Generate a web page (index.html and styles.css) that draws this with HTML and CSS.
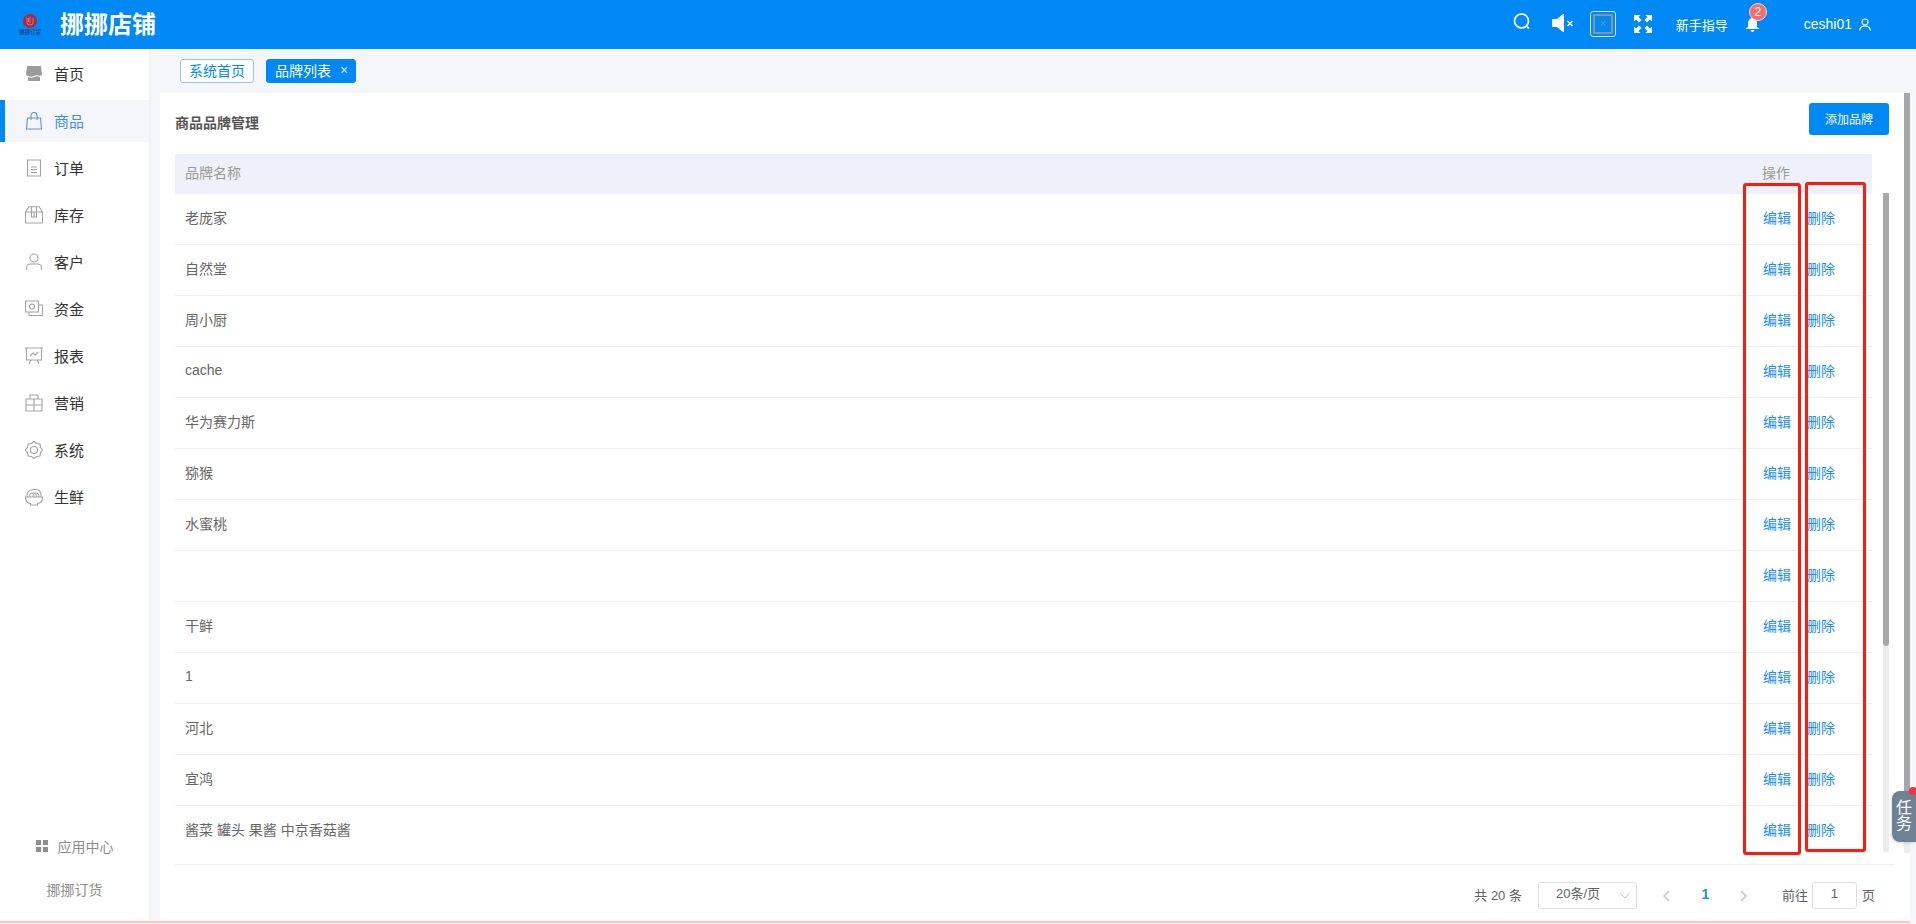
FILE: index.html
```html
<!DOCTYPE html>
<html lang="zh-CN">
<head>
<meta charset="utf-8">
<title>商品品牌管理</title>
<link rel="stylesheet" href="styles.css">
</head>
<body>
<div class="app">
  <header class="topbar">
    <div class="logo">
      <svg class="logo-mark" viewBox="0 0 14 14" width="14" height="14"><circle cx="7" cy="7" r="7" fill="#a82a45"/><path d="M4 3.500v5q0 2.500 3 2.500t3-2.500v-5M7 2.500v7M5.500 4v4" fill="none" stroke="#d88a96" stroke-width=".8"/></svg>
      <span class="logo-text">挪挪订货</span>
    </div>
    <h1 class="brand">挪挪店铺</h1>
    <div class="top-actions">
      <svg class="ic-search" width="18" height="18" viewBox="0 0 18 18" fill="none" stroke="#fff" stroke-width="1.700"><circle cx="8.500" cy="8" r="7"/><path d="M14 13.500l2 2"/></svg>
      <svg class="ic-sound" width="22" height="18" viewBox="0 0 22 18"><path d="M0 6q0-1 1-1h4l6-5q1-.5 1 1v16q0 1.500-1 1l-6-5H1q-1 0-1-1z" fill="#fff"/><path d="M15.500 7l5 5M20.500 7l-5 5" stroke="#fff" stroke-width="1.500"/></svg>
      <div class="broken-box"><div class="broken-inner">×</div></div>
      <svg class="ic-expand" width="18" height="18" viewBox="0 0 18 18" fill="#fff"><path d="M0 0h6.500L4.500 2l3 3-2.500 2.500-3-3L0 6.500zM18 0v6.500l-2-2-3 3L10.500 5l3-3-2-2zM0 18v-6.500l2 2 3-3L7.500 13l-3 3 2 2zM18 18h-6.500l2-2-3-3 2.500-2.500 3 3 2-2z"/></svg>
      <span class="guide">新手指导</span>
      <div class="bell">
        <svg width="15" height="15" viewBox="0 0 15 15" fill="#fff"><path d="M7.500 0a1 1 0 0 1 1 1.200C11 2 12 4 12 6.500V10l2.500 2H.5L3 10V6.500C3 4 4 2 6.500 1.200A1 1 0 0 1 7.500 0zM5.500 13h4q-.5 2-2 2t-2-2z"/></svg>
        <span class="badge">2</span>
      </div>
      <span class="username">ceshi01</span>
      <svg class="ic-user" width="12" height="13" viewBox="0 0 12 13" fill="none" stroke="#fff" stroke-width="1.200"><circle cx="6" cy="4" r="3"/><path d="M.7 12.500Q1 8 6 8t5.300 4.500"/></svg>
    </div>
  </header>

  <div class="layout">
    <aside class="sidebar">
      <nav class="menu">
        <a class="menu-item"><svg class="mi" viewBox="0 0 18 18"><path d="M2 1h14l1 9-2 1v5H3v-5l-2-1z" fill="#9b9b9b" stroke="none"/><path d="M3 11.500q3 1.500 6 0t6 0" stroke="#fff"/></svg>首页</a>
        <a class="menu-item active"><svg class="mi" viewBox="0 0 18 18"><path d="M2.500 6h13l1 11h-15zM6 8V3.500a3 3 0 0 1 6 0V8"/></svg>商品</a>
        <a class="menu-item"><svg class="mi" viewBox="0 0 18 18"><path d="M2.500 1h13v16h-13zM6 8h6M6 10.500h6M6 13.500h6"/></svg>订单</a>
        <a class="menu-item"><svg class="mi" viewBox="0 0 18 18"><path d="M.5 6L4 .8h10L17.500 6v11H.5zM.5 6h17M6.500 1v10h5V1M9 6v5"/></svg>库存</a>
        <a class="menu-item"><svg class="mi" viewBox="0 0 18 18"><circle cx="9" cy="5" r="4"/><path d="M1.500 17v-2q0-4 4-4h7q4 0 4 4v2"/></svg>客户</a>
        <a class="menu-item"><svg class="mi" viewBox="0 0 18 18"><path d="M.5 1h13v11H.5zM14 5h3.500v10.500H4V12"/><circle cx="7" cy="6.500" r="2.500"/></svg>资金</a>
        <a class="menu-item"><svg class="mi" viewBox="0 0 18 18"><path d="M0 1h18M1.500 1v12h15V1M6 13l-2 4M12 13l2 4M5 9l3-3 2 2 3-3"/></svg>报表</a>
        <a class="menu-item"><svg class="mi" viewBox="0 0 18 18"><path d="M1 5h16v12H1zM1 11h16M9 5v12M5 5V1h8v4"/></svg>营销</a>
        <a class="menu-item"><svg class="mi" viewBox="0 0 18 18"><path d="M17.500 9L15.500 11.700 15 15 11.700 15.500 9 17.500 6.300 15.500 3 15 2.500 11.700 .5 9 2.500 6.300 3 3 6.300 2.500 9 .5 11.700 2.500 15 3 15.500 6.300z" stroke-linejoin="round"/><circle cx="9" cy="9" r="3.500"/></svg>系统</a>
        <a class="menu-item"><svg class="mi" viewBox="0 0 18 18"><path d="M.5 9h17q0 6-5 6.500v1.500h-7v-1.500Q.5 15 .5 9zM2 9q-1-7 7-7.500T16 9M5 9q-1-4 3-4t3 4M8 9q0-4 3-4t3 4"/></svg>生鲜</a>
      </nav>
      <div class="side-bottom">
        <a class="side-link"><svg class="grid-ic" width="12" height="12" viewBox="0 0 12 12" fill="#8f8f8f"><rect width="5" height="5"/><rect x="7" width="5" height="5"/><rect y="7" width="5" height="5"/><rect x="7" y="7" width="5" height="5"/></svg>应用中心</a>
        <a class="side-link">挪挪订货</a>
      </div>
    </aside>

    <main class="main">
      <div class="tags">
        <span class="tag">系统首页</span>
        <span class="tag tag-on">品牌列表<i class="tag-x">×</i></span>
      </div>
      <section class="card">
        <div class="card-body">
          <div class="card-head">
            <h2 class="card-title">商品品牌管理</h2>
            <button class="btn-add">添加品牌</button>
          </div>
          <div class="table-zone">
            <div class="table">
              <div class="row row-head"><span class="name">品牌名称</span><span class="op-head">操作</span></div>
              <div class="rows">
                <div class="row"><span class="name">老庞家</span><a class="op">编辑</a><a class="op">删除</a></div>
                <div class="row"><span class="name">自然堂</span><a class="op">编辑</a><a class="op">删除</a></div>
                <div class="row"><span class="name">周小厨</span><a class="op">编辑</a><a class="op">删除</a></div>
                <div class="row"><span class="name">cache</span><a class="op">编辑</a><a class="op">删除</a></div>
                <div class="row"><span class="name">华为赛力斯</span><a class="op">编辑</a><a class="op">删除</a></div>
                <div class="row"><span class="name">猕猴</span><a class="op">编辑</a><a class="op">删除</a></div>
                <div class="row"><span class="name">水蜜桃</span><a class="op">编辑</a><a class="op">删除</a></div>
                <div class="row"><span class="name"></span><a class="op">编辑</a><a class="op">删除</a></div>
                <div class="row"><span class="name">干鲜</span><a class="op">编辑</a><a class="op">删除</a></div>
                <div class="row"><span class="name">1</span><a class="op">编辑</a><a class="op">删除</a></div>
                <div class="row"><span class="name">河北</span><a class="op">编辑</a><a class="op">删除</a></div>
                <div class="row"><span class="name">宜鸿</span><a class="op">编辑</a><a class="op">删除</a></div>
                <div class="row"><span class="name">酱菜 罐头 果酱 中京香菇酱</span><a class="op">编辑</a><a class="op">删除</a></div>
              </div>
            </div>
            <div class="inner-scroll"><div class="inner-thumb"></div></div>
          </div>
          <footer class="pager">
            <span class="total">共 20 条</span>
            <div class="size-select">20条/页<svg class="chev" width="10" height="6" viewBox="0 0 10 6" fill="none" stroke="#c0c4cc"><path d="M.5.5L5 5 9.500.5"/></svg></div>
            <div class="pages">
              <span class="page-cell"><svg width="8" height="12" viewBox="0 0 8 12" fill="none" stroke="#c0c4cc" stroke-width="1.500"><path d="M7 1L2 6l5 5"/></svg></span>
              <span class="page-cell current">1</span>
              <span class="page-cell"><svg width="8" height="12" viewBox="0 0 8 12" fill="none" stroke="#c0c4cc" stroke-width="1.500"><path d="M1 1l5 5-5 5"/></svg></span>
            </div>
            <span class="goto">前往</span>
            <div class="page-input">1</div>
            <span class="goto-end">页</span>
          </footer>
        </div>
        <div class="outer-scroll"><div class="outer-thumb"></div></div>
      </section>
    </main>
  </div>
  <div class="pink-line"></div>
</div>

<div class="mark mark-edit"></div>
<div class="mark mark-del"></div>
<div class="task">任务<i class="task-dot"></i></div>
</body>
</html>
```
FILE: styles.css
```css
* { box-sizing: border-box; }
html { margin: 0; height: 924px; overflow: hidden; }
body {
  position: relative;
  margin: 0;
  height: 924px;
  overflow: hidden;
  background: #f5f6fa;
  font-family: "Liberation Sans", "Noto Sans CJK SC", sans-serif;
  font-size: 14px;
  color: #666;
}
h1, h2 { margin: 0; }
a { color: inherit; text-decoration: none; }

.app { display: flex; flex-direction: column; height: 924px; overflow: hidden; }

/* top bar */
.topbar {
  display: flex;
  align-items: center;
  flex: none;
  height: 49px;
  background: #0089f5;
  color: #fff;
}
.logo {
  display: flex;
  flex-direction: column;
  align-items: center;
  width: 26px;
  margin-left: 17px;
  margin-top: 1px;
}
.logo-mark { display: block; }
.logo-text {
  font-size: 5.5px;
  line-height: 7px;
  margin-top: 1px;
  color: #0d2f5c;
  white-space: nowrap;
}
.brand {
  margin-left: 17px;
  font-size: 24px;
  line-height: 30px;
  font-weight: 700;
  color: #fff;
}
.top-actions {
  display: flex;
  align-items: center;
  margin-left: auto;
  padding-right: 45px;
  height: 100%;
}
.ic-search { margin-top: -5px; }
.ic-sound { margin-left: 21px; margin-top: -3px; }
.broken-box {
  width: 26px;
  height: 26px;
  margin-left: 16px;
  margin-top: -1px;
  padding: 2px;
  border: 1px solid #cbe6fd;
  border-radius: 3px;
}
.broken-inner {
  width: 20px;
  height: 20px;
  border: 2px solid #8a93a0;
  color: #8a93a0;
  font-size: 11px;
  line-height: 15px;
  text-align: center;
}
.ic-expand { margin-left: 18px; margin-top: -1px; }
.guide { margin-left: 24px; font-size: 13px; margin-top: -1px; }
.bell { position: relative; margin-left: 17px; height: 15px; margin-top: -1px; }
.bell svg { display: block; }
.badge {
  position: absolute;
  left: 4px;
  top: -14px;
  width: 18px;
  height: 18px;
  border: 1px solid #fbd5d5;
  border-radius: 50%;
  background: #f56c6c;
  color: #fff;
  font-size: 12px;
  line-height: 16px;
  text-align: center;
}
.username { margin-left: 44px; font-size: 14px; margin-top: -1px; }
.ic-user { margin-left: 7px; margin-top: -1px; }

/* layout */
.layout { display: flex; flex: 1; min-height: 0; }

.sidebar {
  display: flex;
  flex-direction: column;
  flex: none;
  width: 149px;
  padding: 4px 0 9px;
  background: #fff;
  box-shadow: 1px 0 2px rgba(0, 0, 0, .04);
}
.menu { display: flex; flex-direction: column; gap: 5px; }
.menu-item {
  display: flex;
  align-items: center;
  gap: 11px;
  height: 42px;
  padding: 0 0 2px 20px;
  border-left: 5px solid transparent;
  color: #333;
  font-size: 15px;
}
.mi {
  width: 18px;
  height: 18px;
  flex: none;
  margin-top: 2px;
  fill: none;
  stroke: #a3a3a3;
  stroke-width: 1.100;
}
.menu-item.active { border-left-color: #0089f5; background: #f5f6fa; color: #3c8ef3; }
.menu-item.active .mi { stroke: #5b92f0; }
.side-bottom { margin-top: auto; display: flex; flex-direction: column; gap: 1px; }
.side-link {
  display: flex;
  align-items: center;
  justify-content: center;
  height: 42px;
  padding-bottom: 4px;
  color: #8d8d8d;
  font-size: 14px;
}
.grid-ic { margin-right: 10px; }

/* main */
.main { display: flex; flex-direction: column; flex: 1; min-width: 0; padding: 0 6px 0 11px; }
.tags { display: flex; gap: 12px; flex: none; height: 44px; padding: 10px 0 0 20px; }
.tag {
  display: flex;
  align-items: center;
  justify-content: center;
  width: 74px;
  height: 24px;
  padding-bottom: 2px;
  border: 1px solid #8cc7fa;
  border-radius: 3px;
  background: #fff;
  color: #0089f5;
  font-size: 14px;
}
.tag-on {
  width: 90px;
  justify-content: flex-start;
  padding-left: 8px;
  border-color: #0089f5;
  background: #0089f5;
  color: #fff;
}
.tag-x { margin-left: 9px; font-style: normal; font-size: 14px; color: #d5ebfd; }

.card { display: flex; flex: 1; min-height: 0; background: #fff; }
.card-body { flex: 1; min-width: 0; padding: 10px 15px 0; display: flex; flex-direction: column; }
.card-head { display: flex; align-items: center; justify-content: space-between; flex: none; height: 32px; margin-bottom: 19px; }
.card-title { font-size: 14px; font-weight: 700; color: #555; padding-top: 6px; }
.btn-add {
  width: 80px;
  height: 32px;
  padding: 0 0 2px;
  border: 0;
  border-radius: 3px;
  background: #0089f5;
  color: #fff;
  font-family: inherit;
  font-size: 12px;
}

.table-zone { display: flex; gap: 11px; flex: none; height: 698px; }
.table { flex: 1; min-width: 0; display: flex; flex-direction: column; }
.rows { flex: 1; min-height: 0; overflow: hidden; }
.row {
  display: flex;
  align-items: center;
  height: 51px;
  padding-right: 21px;
  border-bottom: 1px solid #ebeef5;
}
.row-head {
  flex: none;
  height: 40px;
  border-bottom: 0;
  background: #eef1f9;
  color: #999;
}
.name { flex: 1; min-width: 0; padding: 0 0 5px 10px; white-space: nowrap; }
.row-head .name { padding-bottom: 4px; }
.op-head { width: 89px; flex: none; padding-bottom: 4px; margin-left: -1px; }
.op { flex: none; width: 44px; padding-bottom: 4px; color: #1d8ef1; }

.inner-scroll { width: 6px; flex: none; height: 659px; margin-top: 39px; background: #ededed; }
.inner-thumb { height: 453px; border-radius: 0 0 3px 3px; background: #a8a8a8; }

.pager {
  display: flex;
  align-items: center;
  flex: none;
  margin: 12px -6px 0 0;
  padding: 17px 20px 0 0;
  border-top: 1px solid #ebeef5;
  justify-content: flex-end;
  font-size: 13px;
  color: #606266;
}
.total { margin-right: 16px; padding-bottom: 3px; }
.size-select {
  position: relative;
  width: 99px;
  height: 27px;
  padding-left: 17px;
  border: 1px solid #dcdfe6;
  border-radius: 3px;
  line-height: 22px;
}
.chev { position: absolute; right: 6px; top: 10px; }
.pages { display: flex; margin: 0 18px 0 10px; }
.page-cell {
  display: flex;
  align-items: center;
  justify-content: center;
  width: 39px;
  height: 27px;
}
.current { color: #1d8ef1; font-weight: 700; font-size: 14px; padding-bottom: 3px; }
.goto { margin-right: 4px; padding-bottom: 3px; }
.page-input {
  width: 45px;
  height: 27px;
  border: 1px solid #dcdfe6;
  border-radius: 3px;
  line-height: 22px;
  text-align: center;
}
.goto-end { margin-left: 5px; padding-bottom: 3px; }

.outer-scroll { width: 6px; flex: none; height: 760px; background: #ededed; }
.outer-thumb { height: 748px; background: #a8a8a8; }

.pink-line { flex: none; height: 2px; margin: 0 6px 1px 0; background: #ffc4bd; }

/* overlays */
.mark {
  position: absolute;
  border: 3px solid #ff1a0e;
  border-radius: 3px;
}
.mark-edit { left: 1743px; top: 183px; width: 58px; height: 672px; }
.mark-del { left: 1805px; top: 182px; width: 61px; height: 670px; }
.task {
  position: absolute;
  right: 0;
  top: 791px;
  width: 24px;
  height: 51px;
  padding: 9px 4px 0;
  border-radius: 8px 0 0 8px;
  background: #6f8295;
  color: #fff;
  font-size: 16px;
  line-height: 16px;
  box-shadow: -1px 1px 3px rgba(0, 0, 0, .15);
}
.task-dot {
  position: absolute;
  right: -1px;
  top: -4px;
  width: 8px;
  height: 8px;
  border-radius: 50%;
  background: #f5333f;
}
```
